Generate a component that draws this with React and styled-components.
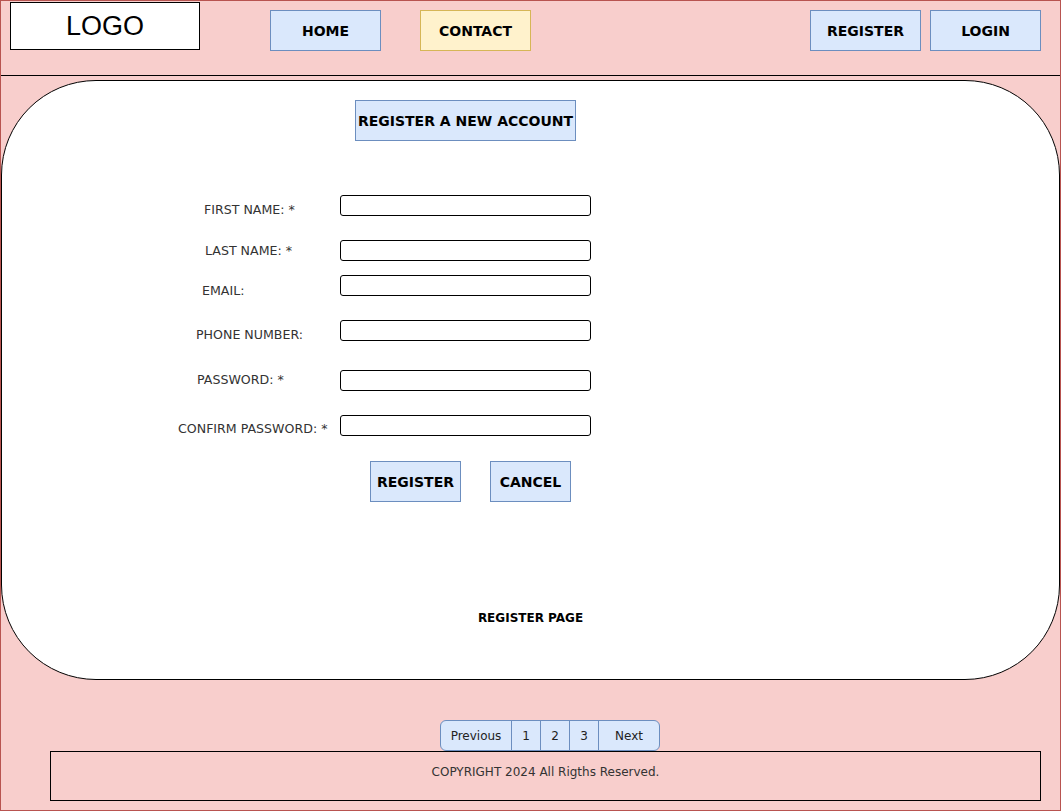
import React from "react";
import styled, { createGlobalStyle } from "styled-components";

const GlobalStyle = createGlobalStyle`
  html, body { margin: 0; padding: 0; background: #ffffff; }
  body { font-family: "DejaVu Sans", Verdana, sans-serif; }
  * { box-sizing: border-box; }
`;

const Page = styled.div`
  width: 1061px;
  height: 811px;
  border: 1px solid #b85450;
  background: #f8cecc;
  display: flex;
  flex-direction: column;
`;

const Header = styled.header`
  height: 75px;
  padding: 1px 19px 0 9px;
  border-bottom: 1px solid #000;
  display: flex;
  align-items: flex-start;
`;

const Logo = styled.div`
  width: 190px;
  height: 48px;
  border: 1px solid #000;
  background: #fff;
  font-family: "Liberation Sans", Arial, sans-serif;
  font-size: 27px;
  line-height: 46px;
  text-align: center;
  color: #000;
`;

const NavGroup = styled.nav`
  margin-top: 8px;
  margin-left: ${(p) => (p.$push ? "auto" : "70px")};
  display: flex;
  gap: ${(p) => p.$gap}px;
`;

const Box = styled.div`
  width: ${(p) => p.$w}px;
  height: ${(p) => p.$h || 41}px;
  border: 1px solid ${(p) => (p.$yellow ? "#d6b656" : "#6c8ebf")};
  background: ${(p) => (p.$yellow ? "#fff2cc" : "#dae8fc")};
  display: flex;
  align-items: center;
  justify-content: center;
  font-weight: bold;
  font-size: 14px;
  color: #000;
  white-space: nowrap;
`;

const Panel = styled.main`
  margin-top: 4px;
  height: 600px;
  border: 1px solid #000;
  border-radius: 95px;
  background: #fff;
  padding-top: 19px;
  display: flex;
  flex-direction: column;
  align-items: flex-start;
`;

const Title = styled(Box)`
  margin-left: 353px;
`;

const FormRow = styled.div`
  margin-top: ${(p) => p.$space}px;
  height: 21px;
  display: flex;
  align-items: flex-start;
`;

const Label = styled.label`
  flex-shrink: 0;
  width: 338px;
  padding-left: ${(p) => p.$indent}px;
  font-size: 12.6px;
  line-height: ${(p) => 21 + 2 * p.$drop}px;
  color: #333;
  white-space: nowrap;
`;

const Field = styled.input`
  width: 251px;
  height: 21px;
  border: 1px solid #000;
  border-radius: 3px;
  background: #fff;
  padding: 0 4px;
  margin: 0;
  outline: none;
`;

const Actions = styled.div`
  margin-top: 25px;
  margin-left: 368px;
  display: flex;
  gap: 29px;
`;

const Caption = styled.div`
  align-self: stretch;
  margin-top: 109px;
  text-align: center;
  font-size: 12px;
  line-height: 14px;
  font-weight: bold;
  color: #000;
`;

const Pager = styled.div`
  margin-top: 40px;
  margin-left: 439px;
  height: 31px;
  align-self: flex-start;
  display: flex;
  border: 1px solid #6c8ebf;
  border-radius: 6px;
  background: #dae8fc;
  overflow: hidden;
`;

const PageItem = styled.div`
  flex: 0 0 ${(p) => p.$w}px;
  display: flex;
  align-items: center;
  justify-content: center;
  font-size: 12px;
  color: #222;
  & + & {
    border-left: 1px solid #6c8ebf;
  }
`;

const Footer = styled.footer`
  margin-left: 49px;
  width: 991px;
  height: 50px;
  border: 1px solid #000;
  padding-top: 12px;
  text-align: center;
  font-size: 12px;
  line-height: 16px;
  color: #333;
`;

const fields = [
  { label: "FIRST NAME: *", indent: 202, drop: 4, space: 54 },
  { label: "LAST NAME: *", indent: 203, drop: 0, space: 24 },
  { label: "EMAIL:", indent: 200, drop: 5, space: 14 },
  { label: "PHONE NUMBER:", indent: 194, drop: 4, space: 24 },
  { label: "PASSWORD: *", indent: 195, drop: -1, space: 29 },
  { label: "CONFIRM PASSWORD: *", indent: 176, drop: 3, space: 24 },
];

const pages = [
  { t: "Previous", w: 70 },
  { t: "1", w: 29 },
  { t: "2", w: 29 },
  { t: "3", w: 29 },
  { t: "Next", w: 61 },
];

export default function App() {
  return (
    <>
      <GlobalStyle />
      <Page>
        <Header>
          <Logo>LOGO</Logo>
          <NavGroup $gap={39}>
            <Box $w={111}>HOME</Box>
            <Box $w={111} $yellow>CONTACT</Box>
          </NavGroup>
          <NavGroup $push $gap={9}>
            <Box $w={111}>REGISTER</Box>
            <Box $w={111}>LOGIN</Box>
          </NavGroup>
        </Header>
        <Panel>
          <Title $w={221}>REGISTER A NEW ACCOUNT</Title>
          {fields.map((f) => (
            <FormRow key={f.label} $space={f.space}>
              <Label $indent={f.indent} $drop={f.drop}>{f.label}</Label>
              <Field type={f.label.startsWith("PASSWORD") || f.label.startsWith("CONFIRM") ? "password" : "text"} />
            </FormRow>
          ))}
          <Actions>
            <Box $w={91}>REGISTER</Box>
            <Box $w={81}>CANCEL</Box>
          </Actions>
          <Caption>REGISTER PAGE</Caption>
        </Panel>
        <Pager>
          {pages.map((p) => (
            <PageItem key={p.t} $w={p.w}>{p.t}</PageItem>
          ))}
        </Pager>
        <Footer>COPYRIGHT 2024 All Rigths Reserved.</Footer>
      </Page>
    </>
  );
}
